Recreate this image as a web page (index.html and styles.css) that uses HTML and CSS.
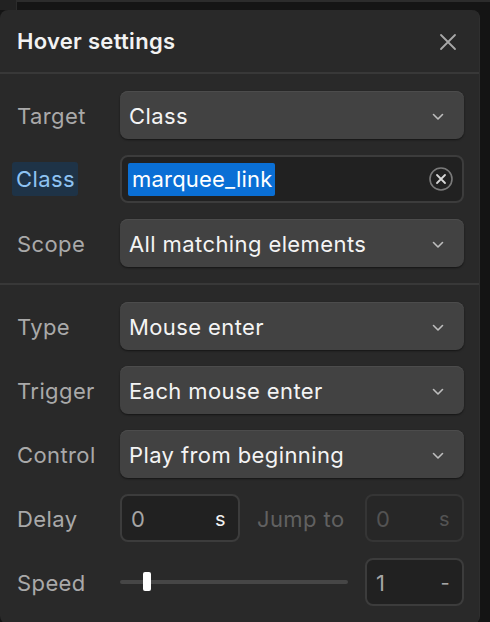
FILE: index.html
```html
<!DOCTYPE html>
<html>
<head>
<meta charset="utf-8">
<link rel="stylesheet" href="styles.css">
</head>
<body>
<div class="backdrop">
  <div class="bd-left"></div>
  <div class="bd-right"></div>
</div>
<div class="panel">
  <div class="header">
    <h1 class="title">Hover settings</h1>
    <svg class="close" width="20" height="20" viewBox="0 0 20 20"><path d="M3 3L17 17M17 3L3 17" stroke="#a8a8a8" stroke-width="1.8" stroke-linecap="round"/></svg>
  </div>
  <div class="section">
    <div class="row">
      <span class="label">Target</span>
      <div class="select"><span>Class</span><svg class="chev" width="12" height="8" viewBox="0 0 12 8"><path d="M1.5 1.5L6 6L10.5 1.5" fill="none" stroke="#bdbdbd" stroke-width="1.6" stroke-linecap="round" stroke-linejoin="round"/></svg></div>
    </div>
    <div class="row">
      <span class="label label-active">Class</span>
      <div class="input input-class"><span class="selected">marquee_link</span><svg class="clear" width="26" height="26" viewBox="0 0 26 26"><circle cx="13" cy="13" r="11" fill="none" stroke="#7a7a7a" stroke-width="1.6"/><path d="M9 9L17 17M17 9L9 17" stroke="#d8d8d8" stroke-width="1.8" stroke-linecap="round"/></svg></div>
    </div>
    <div class="row">
      <span class="label">Scope</span>
      <div class="select"><span>All matching elements</span><svg class="chev" width="12" height="8" viewBox="0 0 12 8"><path d="M1.5 1.5L6 6L10.5 1.5" fill="none" stroke="#bdbdbd" stroke-width="1.6" stroke-linecap="round" stroke-linejoin="round"/></svg></div>
    </div>
  </div>
  <div class="section">
    <div class="row">
      <span class="label">Type</span>
      <div class="select"><span>Mouse enter</span><svg class="chev" width="12" height="8" viewBox="0 0 12 8"><path d="M1.5 1.5L6 6L10.5 1.5" fill="none" stroke="#bdbdbd" stroke-width="1.6" stroke-linecap="round" stroke-linejoin="round"/></svg></div>
    </div>
    <div class="row">
      <span class="label">Trigger</span>
      <div class="select"><span>Each mouse enter</span><svg class="chev" width="12" height="8" viewBox="0 0 12 8"><path d="M1.5 1.5L6 6L10.5 1.5" fill="none" stroke="#bdbdbd" stroke-width="1.6" stroke-linecap="round" stroke-linejoin="round"/></svg></div>
    </div>
    <div class="row">
      <span class="label">Control</span>
      <div class="select"><span>Play from beginning</span><svg class="chev" width="12" height="8" viewBox="0 0 12 8"><path d="M1.5 1.5L6 6L10.5 1.5" fill="none" stroke="#bdbdbd" stroke-width="1.6" stroke-linecap="round" stroke-linejoin="round"/></svg></div>
    </div>
    <div class="row">
      <span class="label">Delay</span>
      <div class="pair">
        <div class="input num"><span class="val">0</span><span class="unit">s</span></div>
        <span class="label-dim">Jump to</span>
        <div class="input num small disabled"><span class="val">0</span><span class="unit">s</span></div>
      </div>
    </div>
    <div class="row">
      <span class="label">Speed</span>
      <div class="pair">
        <div class="slider"><div class="track"></div><div class="thumb"></div></div>
        <div class="input num small"><span class="val">1</span><span class="unit dim">-</span></div>
      </div>
    </div>
  </div>
</div>
</body>
</html>
```
FILE: styles.css
```css
* { box-sizing: border-box; }
html, body { margin: 0; padding: 0; }
body {
  background: #141414;
  font-family: Inter, "Noto Sans", sans-serif;
  width: 490px;
  height: 622px;
  overflow: hidden;
}
.backdrop {
  display: flex;
  height: 10px;
}
.bd-left { width: 16px; background: #222222; }
.bd-right {
  flex: 1;
  background: #151515;
  border-top: 2px solid #2c2c2c;
  border-left: 1px solid #2c2c2c;
}
.panel {
  width: 480px;
  height: 614px;
  background: #292929;
  border-radius: 8px;
  border-right: 1px solid #2f2f2f;
}
.header {
  height: 64px;
  display: flex;
  align-items: center;
  justify-content: space-between;
  padding: 0 21px 0 17px;
  border-bottom: 2px solid #383838;
}
.title {
  margin: 0;
  font-size: 22px;
  font-weight: 600;
  color: #f2f2f2;
  letter-spacing: 0.3px;
}
.close { margin-top: 2px; }
.section {
  display: flex;
  flex-direction: column;
  gap: 16px;
  padding: 17px 15px 16px 0;
  border-bottom: 2px solid #383838;
}
.section:last-child { border-bottom: none; }
.row {
  display: flex;
  align-items: center;
  height: 48px;
  font-size: 22px;
  letter-spacing: 0.4px;
}
.label {
  width: 120px;
  padding-left: 17px;
  padding-top: 2px;
  color: #a9a9a9;
}
.label-active {
  margin-left: 12px;
  width: 66px;
  padding: 4px 0 4px 4px;
  margin-right: 42px;
  background: #1e3347;
  color: #8ec3f2;
  border-radius: 3px;
}
.select {
  flex: 1;
  height: 48px;
  display: flex;
  align-items: center;
  justify-content: space-between;
  padding: 1px 20px 0 9px;
  background: #424242;
  border-radius: 8px;
  box-shadow: inset 0 1px 0 #4c4c4c, 0 1px 2px rgba(0,0,0,0.5);
  color: #f4f4f4;
}
.chev { margin-top: 2px; }
.input {
  height: 48px;
  display: flex;
  align-items: center;
  background: #212121;
  border: 2px solid #3c3c3c;
  border-radius: 8px;
}
.input-class {
  flex: 1;
  justify-content: space-between;
  padding: 0 8px 0 6px;
}
.selected {
  background: #0a6fd5;
  color: #ffffff;
  padding: 2px 2px 3px 4px;
  border-radius: 2px;
  line-height: 28px;
  letter-spacing: 0.2px;
}
.pair {
  flex: 1;
  display: flex;
  align-items: center;
}
.num {
  width: 120px;
  justify-content: space-between;
  padding: 1px 12px 0 9px;
}
.num .val { color: #a5a5a5; }
.num .unit { color: #f0f0f0; font-size: 20px; }
.num .unit.dim { color: #a5a5a5; }
.small { width: 99px; margin-left: auto; }
.label-dim {
  margin-left: 17px;
  padding-top: 2px;
  color: #616161;
}
.disabled {
  background: #272727;
  border-color: #353535;
}
.disabled .val, .disabled .unit { color: #535353; }
.slider {
  position: relative;
  width: 228px;
  height: 24px;
  display: flex;
  align-items: center;
}
.track {
  width: 100%;
  height: 4px;
  background: #464646;
  border-radius: 2px;
}
.thumb {
  position: absolute;
  left: 23px;
  top: 2px;
  width: 8px;
  height: 19px;
  background: #ffffff;
  border-radius: 2px;
}
```
